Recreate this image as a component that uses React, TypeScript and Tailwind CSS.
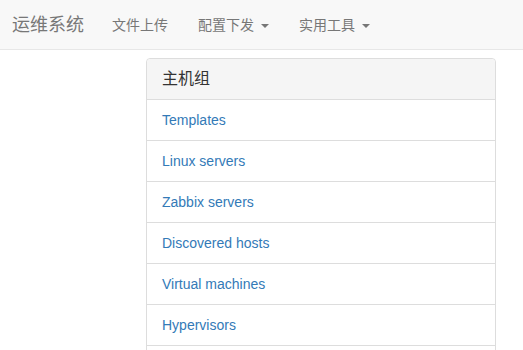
const hostGroups = [
  "Templates",
  "Linux servers",
  "Zabbix servers",
  "Discovered hosts",
  "Virtual machines",
  "Hypervisors",
  "",
];

const Caret = () => (
  <span className="ml-[7px] mt-[2px] inline-block h-0 w-0 border-x-[4px] border-t-[4px] border-x-transparent border-t-[#777] align-middle" />
);

const App = () => {
  return (
    <div
      className="min-h-[350px] h-[350px] overflow-hidden bg-white text-[14px] leading-[20px] text-[#333]"
      style={{ fontFamily: '"Liberation Sans", "Noto Sans CJK SC", sans-serif' }}
    >
      {/* Navbar */}
      <nav className="flex h-[50px] items-stretch border-b border-[#e7e7e7] bg-[#f8f8f8]">
        <a className="flex items-center pl-[12px] pr-[13px] text-[18px] text-[#777]">运维系统</a>
        <ul className="flex items-stretch">
          <li className="flex items-center px-[15px] text-[#777]">文件上传</li>
          <li className="flex items-center px-[15px] text-[#777]">
            配置下发
            <Caret />
          </li>
          <li className="flex items-center px-[15px] text-[#777]">
            实用工具
            <Caret />
          </li>
        </ul>
      </nav>

      {/* Host group panel */}
      <div className="ml-[146px] mt-[8px] w-[350px] rounded-[4px] border border-[#ddd] bg-white">
        <div className="rounded-t-[4px] border-b border-[#ddd] bg-[#f5f5f5] px-[15px] py-[10px] text-[16px] leading-[20px] text-[#333]">
          主机组
        </div>
        <div className="flex flex-col">
          {hostGroups.map((name, i) => (
            <div
              key={i}
              className="h-[41px] border-b border-[#ddd] px-[15px] py-[10px] text-[#337ab7]"
            >
              {name}
            </div>
          ))}
        </div>
      </div>
    </div>
  );
};

export default App;
